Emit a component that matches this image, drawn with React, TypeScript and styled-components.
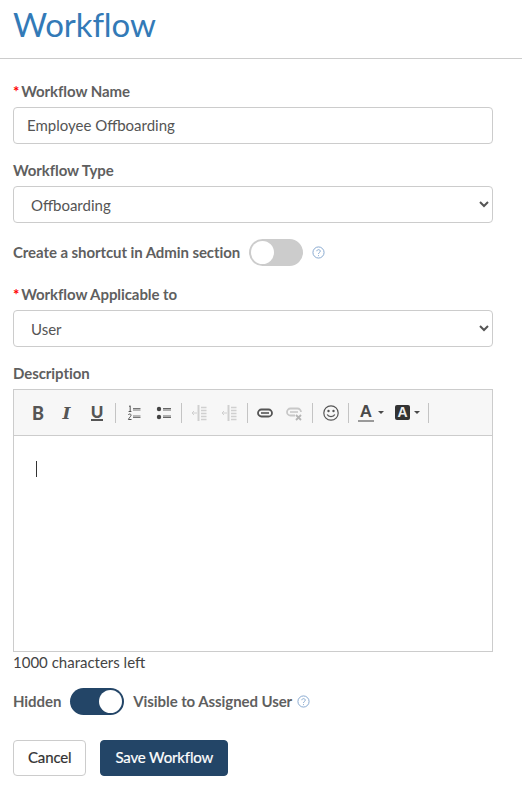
import styled, { createGlobalStyle } from 'styled-components';

const GlobalStyle = createGlobalStyle`
  body {
    margin: 0;
    background: #fff;
    font-family: Lato, "Open Sans", sans-serif;
    color: #333;
  }
`;

const Page = styled.div`
  width: 522px;
  height: 801px;
  overflow: hidden;
  box-sizing: border-box;
`;

const Header = styled.div`
  height: 59px;
  box-sizing: border-box;
  padding-left: 13px;
  border-bottom: 1px solid #ccc;
`;

const Title = styled.h1`
  margin: 0;
  font-size: 33px;
  line-height: 49px;
  font-weight: 400;
  letter-spacing: -0.1px;
  color: #337ab7;
`;

const Form = styled.div`
  padding: 0 29px 0 13px;
`;

const Label = styled.div<{ $top: number }>`
  margin-top: ${p => p.$top}px;
  height: 20px;
  font-size: 15px;
  line-height: 20px;
  font-weight: 700;
  color: #5f5f5f;
  letter-spacing: -0.08px;
`;

const Star = styled.span`
  color: #f00;
  margin-right: 2px;
`;

const TextInput = styled.input`
  display: block;
  width: 100%;
  height: 37px;
  margin-top: 6px;
  box-sizing: border-box;
  padding: 0 13px 2px;
  border: 1px solid #ccc;
  border-radius: 4px;
  font-family: inherit;
  font-size: 15px;
  color: #555;
  outline: none;
`;

const Select = styled.select`
  display: block;
  width: 100%;
  height: 37px;
  margin-top: 6px;
  box-sizing: border-box;
  padding: 0 13px;
  border: 1px solid #ccc;
  border-radius: 4px;
  background: #fff;
  font-family: inherit;
  font-size: 15px;
  color: #555;
  outline: none;
`;

const Row = styled.div<{ $top: number; $gap: number }>`
  display: flex;
  align-items: center;
  gap: ${p => p.$gap}px;
  height: 27px;
  margin-top: ${p => p.$top}px;
  font-size: 15px;
  font-weight: 700;
  color: #5f5f5f;
  letter-spacing: -0.08px;
`;

const RowText = styled.span`
  margin-bottom: 2px;
`;

const Track = styled.div<{ $on: boolean }>`
  display: flex;
  justify-content: ${p => (p.$on ? 'flex-end' : 'flex-start')};
  align-items: center;
  width: 54px;
  height: 27px;
  padding: 2px;
  box-sizing: border-box;
  border-radius: 14px;
  background: ${p => (p.$on ? '#234567' : '#ccc')};
`;

const Knob = styled.div`
  width: 23px;
  height: 23px;
  border-radius: 50%;
  background: #fff;
`;

const Help = styled.svg<{ $pull: number }>`
  width: 13px;
  height: 13px;
  flex: none;
  margin-left: ${p => p.$pull}px;
`;

const Editor = styled.div`
  margin-top: 6px;
  height: 263px;
  box-sizing: border-box;
  border: 1px solid #ccc;
`;

const Toolbar = styled.div`
  display: flex;
  align-items: center;
  height: 46px;
  box-sizing: border-box;
  padding-left: 10px;
  background: #f7f7f7;
  border-bottom: 1px solid #ccc;
`;

const Tool = styled.div<{ $w: number }>`
  display: flex;
  align-items: center;
  justify-content: center;
  gap: 4px;
  width: ${p => p.$w}px;
  height: 20px;
`;

const Divider = styled.div<{ $left: number }>`
  width: 1px;
  height: 20px;
  margin: 0 3px 0 ${p => p.$left}px;
  background: #c4c4c4;
`;

const Glyph = styled.span<{ $font: string; $size: number; $italic?: boolean; $line?: boolean }>`
  font-family: ${p => p.$font}, sans-serif;
  font-size: ${p => p.$size}px;
  font-style: ${p => (p.$italic ? 'italic' : 'normal')};
  font-weight: 900;
  line-height: 14px;
  color: #555;
  border-bottom: ${p => (p.$line ? '2px solid #555' : 'none')};
`;

const Icon = styled.svg`
  width: 16px;
  height: 16px;
  flex: none;
`;

const Caret = styled.span`
  width: 0;
  height: 0;
  border-left: 3px solid transparent;
  border-right: 3px solid transparent;
  border-top: 3px solid #4a4a4a;
`;

const ColorLetter = styled.span`
  width: 16px;
  font-family: "Liberation Sans", sans-serif;
  font-size: 17px;
  line-height: 16px;
  font-weight: 700;
  text-align: center;
  color: #4a4a4a;
  border-bottom: 2px solid #9a9a9a;
`;

const FillLetter = styled.span`
  width: 15px;
  height: 15px;
  border-radius: 2px;
  background: #333;
  font-family: "Liberation Sans", sans-serif;
  font-size: 14px;
  line-height: 15px;
  font-weight: 700;
  text-align: center;
  color: #eee;
`;

const EditArea = styled.div`
  padding: 25px 22px;
`;

const Cursor = styled.div`
  width: 1px;
  height: 16px;
  background: #333;
`;

const Counter = styled.div`
  font-size: 15px;
  line-height: 20px;
  color: #444;
`;

const Actions = styled.div`
  display: flex;
  gap: 14px;
  margin-top: 25px;
`;

const Button = styled.button<{ $primary?: boolean }>`
  height: 36px;
  padding: 0 14px 2px;
  box-sizing: border-box;
  border: 1px solid ${p => (p.$primary ? '#234567' : '#ccc')};
  border-radius: 4px;
  background: ${p => (p.$primary ? '#234567' : '#fff')};
  color: ${p => (p.$primary ? '#fff' : '#333')};
  font-family: inherit;
  font-size: 15px;
  font-weight: 400;
  letter-spacing: -0.15px;
  -webkit-text-stroke: 0.2px currentColor;
`;

const HelpIcon = ({ pull = 0 }: { pull?: number }) => (
  <Help $pull={pull} viewBox="0 0 14 14" fill="none" stroke="#7fa3cc" strokeWidth="1">
    <circle cx="7" cy="7" r="6" />
    <path d="M5.2 5.6 C5.2 3.4 8.9 3.4 8.9 5.6 C8.9 7 7 7 7 8.6" />
    <path d="M7 9.9 V10.9" />
  </Help>
);

const OrderedIcon = () => (
  <Icon viewBox="0 0 16 16" fill="none" stroke="#555">
    <path d="M3 1.5 L4.2 0.8 V6.5 M2.6 6.5 H5.4" strokeWidth="1" />
    <path d="M2.3 10 C2.8 8.5 5.3 8.7 5 10.4 C4.8 11.6 3 12.6 2.4 14.5 H5.5" strokeWidth="1" />
    <path d="M7 3.5 H14.5 M7 5 H14.5 M7 11 H14.5 M7 12.5 H14.5" strokeWidth="1" stroke="#777" />
  </Icon>
);

const BulletIcon = () => (
  <Icon viewBox="0 0 16 16" fill="none" stroke="#666">
    <circle cx="3" cy="4" r="2.2" fill="#444" stroke="none" />
    <circle cx="3" cy="12" r="2.2" fill="#444" stroke="none" />
    <path d="M7 3.5 H15 M7 5 H15 M7 11 H15 M7 12.5 H15" strokeWidth="1" />
  </Icon>
);

const IndentIcon = () => (
  <Icon viewBox="0 0 16 16" fill="none" stroke="#d0d0d0">
    <path d="M7.5 0 V16" strokeWidth="2" />
    <path d="M1 8 H6 M3 6 L1 8 L3 10" strokeWidth="1" />
    <path d="M10 2.5 H15.5 M10 5.5 H15.5 M10 8.5 H15.5 M10 11.5 H15.5 M10 14.5 H15.5" strokeWidth="1.4" />
  </Icon>
);

const LinkIcon = () => (
  <Icon viewBox="0 0 16 16" fill="none" stroke="#555">
    <rect x="1" y="4.5" width="14" height="7" rx="3.5" strokeWidth="1.8" />
    <path d="M4 8 H12" strokeWidth="1.6" />
  </Icon>
);

const UnlinkIcon = () => (
  <Icon viewBox="0 0 16 16" fill="none" stroke="#c8c8c8">
    <path d="M9 10.5 H4.5 A3.5 3.5 0 0 1 4.5 3.5 H11.5 A3.5 3.5 0 0 1 15 7" strokeWidth="1.8" />
    <path d="M4 7 H12" strokeWidth="1.6" />
    <path d="M10 10 L15 15 M15 10 L10 15" strokeWidth="1.8" stroke="#b5b5b5" />
  </Icon>
);

const SmileIcon = () => (
  <Icon viewBox="0 0 16 16" fill="none" stroke="#555">
    <circle cx="8" cy="8" r="7.2" strokeWidth="1.2" />
    <circle cx="5.5" cy="6" r="1.2" fill="#555" stroke="none" />
    <circle cx="10.5" cy="6" r="1.2" fill="#555" stroke="none" />
    <path d="M4.2 9.5 C5.5 12.2 10.5 12.2 11.8 9.5" strokeWidth="1.2" />
  </Icon>
);

export default function App() {
  return (
    <Page>
      <GlobalStyle />
      <Header>
        <Title>Workflow</Title>
      </Header>
      <Form>
        <Label $top={22}><Star>*</Star>Workflow Name</Label>
        <TextInput defaultValue="Employee Offboarding" />

        <Label $top={16}>Workflow Type</Label>
        <Select defaultValue="Offboarding">
          <option>Offboarding</option>
        </Select>

        <Row $top={16} $gap={9}>
          <RowText>Create a shortcut in Admin section</RowText>
          <Track $on={false}><Knob /></Track>
          <HelpIcon />
        </Row>

        <Label $top={18}><Star>*</Star>Workflow Applicable to</Label>
        <Select defaultValue="User">
          <option>User</option>
        </Select>

        <Label $top={16}>Description</Label>
        <Editor>
          <Toolbar>
            <Tool $w={28}><Glyph $font="Lato" $size={18}>B</Glyph></Tool>
            <Tool $w={29}><Glyph $font="'DejaVu Serif'" $size={17} $italic>I</Glyph></Tool>
            <Tool $w={32}><Glyph $font="Lato" $size={17} $line>U</Glyph></Tool>
            <Divider $left={2} />
            <Tool $w={30}><OrderedIcon /></Tool>
            <Tool $w={29}><BulletIcon /></Tool>
            <Divider $left={3} />
            <Tool $w={28}><IndentIcon /></Tool>
            <Tool $w={31}><IndentIcon /></Tool>
            <Divider $left={3} />
            <Tool $w={27}><LinkIcon /></Tool>
            <Tool $w={31}><UnlinkIcon /></Tool>
            <Divider $left={3} />
            <Tool $w={29}><SmileIcon /></Tool>
            <Divider $left={3} />
            <Tool $w={38}><ColorLetter>A</ColorLetter><Caret /></Tool>
            <Tool $w={35}><FillLetter>A</FillLetter><Caret /></Tool>
            <Divider $left={3} />
          </Toolbar>
          <EditArea><Cursor /></EditArea>
        </Editor>
        <Counter>1000 characters left</Counter>

        <Row $top={16} $gap={9}>
          <RowText>Hidden</RowText>
          <Track $on><Knob /></Track>
          <RowText>Visible to Assigned User</RowText>
          <HelpIcon pull={-4} />
        </Row>

        <Actions>
          <Button>Cancel</Button>
          <Button $primary>Save Workflow</Button>
        </Actions>
      </Form>
    </Page>
  );
}
